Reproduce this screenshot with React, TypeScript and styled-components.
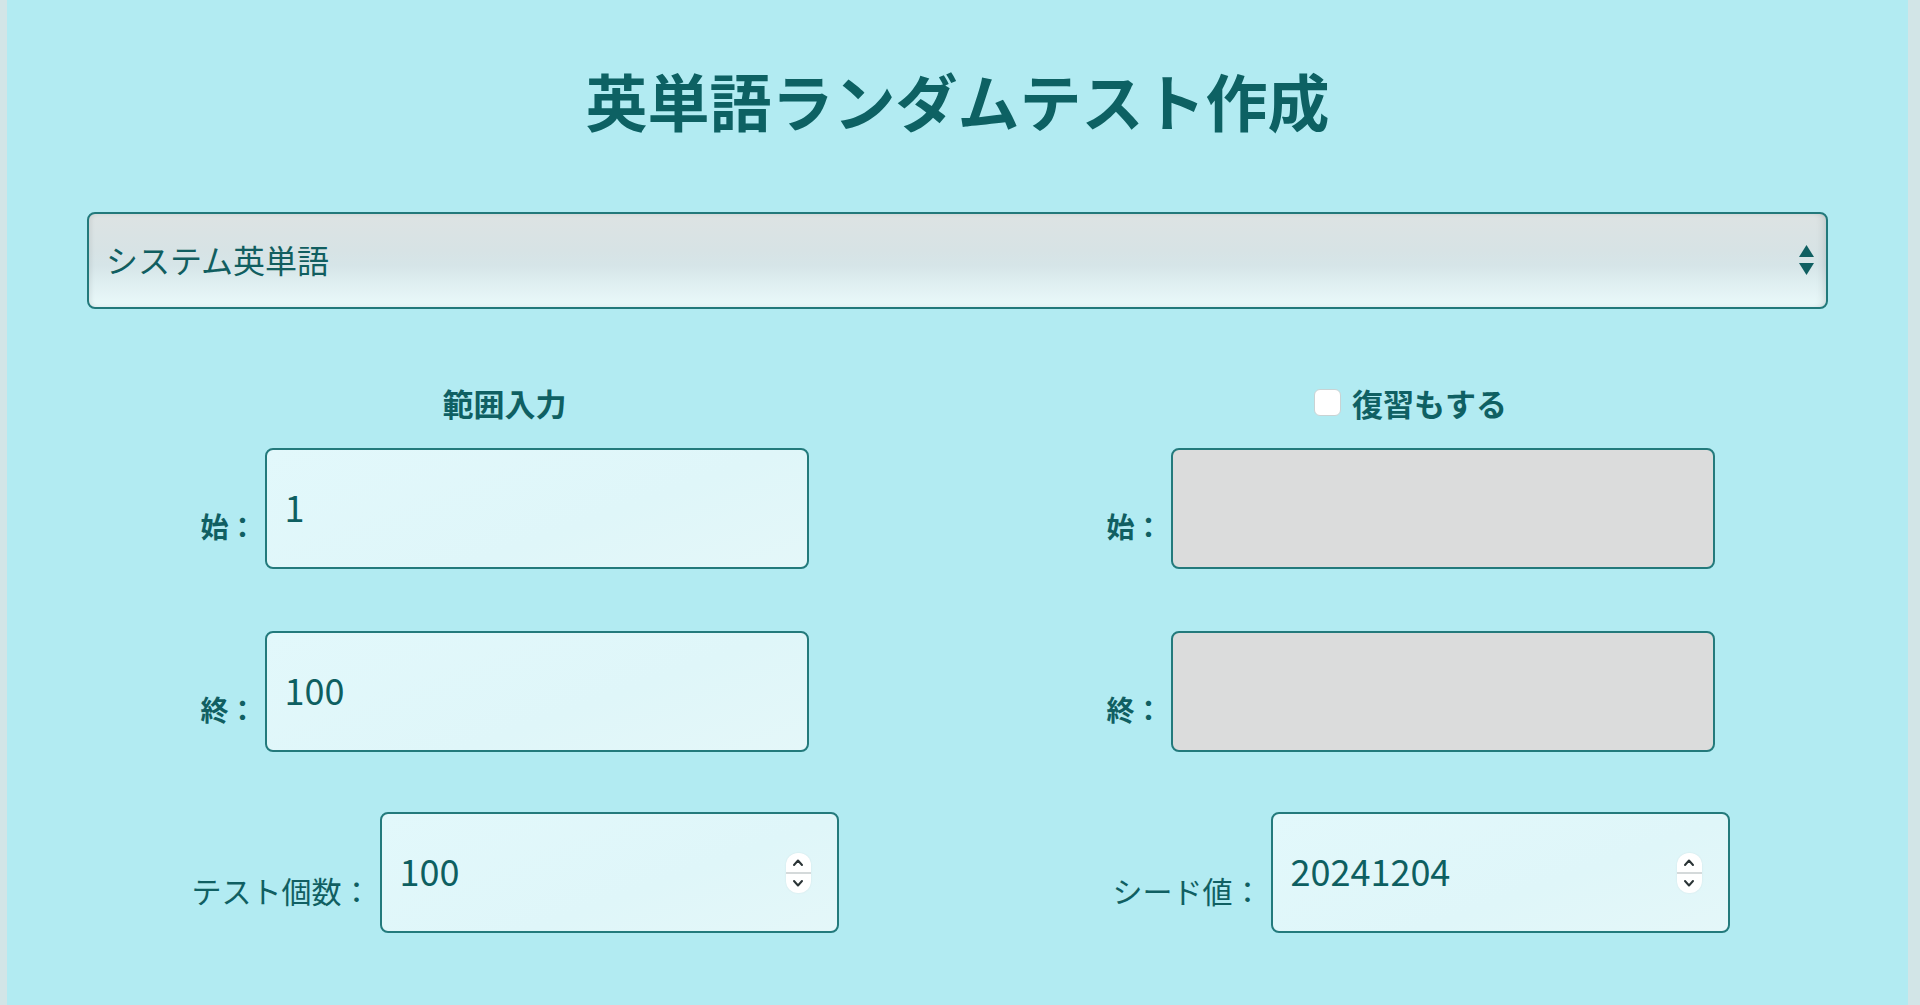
import React from 'react';
import styled, { createGlobalStyle } from 'styled-components';

const GlobalStyle = createGlobalStyle`
  html, body {
    margin: 0;
    padding: 0;
    background: #d2e5e7;
  }
  body {
    font-family: "Noto Sans CJK JP", "Noto Sans", sans-serif;
    color: #0f6264;
  }
`;

const Page = styled.main`
  margin: 0 12px 0 7px;
  min-height: 100vh;
  background: #b2ebf2;
  padding: 62px 80px 60px;
  box-sizing: border-box;
`;

const Title = styled.h1`
  margin: 0;
  text-align: center;
  font-size: 62px;
  line-height: 77px;
  font-weight: 700;
  color: #0d6163;
`;

const SelectWrap = styled.div`
  position: relative;
  margin-top: 73px;
`;

const BookSelect = styled.select`
  appearance: none;
  -webkit-appearance: none;
  display: block;
  width: 100%;
  height: 97px;
  box-sizing: border-box;
  border: 2px solid #22797b;
  border-radius: 8px;
  padding: 0 60px 4px 17px;
  font-family: inherit;
  font-size: 32px;
  color: #115e60;
  background: linear-gradient(
    to bottom,
    #dde3e3 0%,
    #d7e3e5 40%,
    #d6e5e8 55%,
    #dfeff1 75%,
    #eaf9fa 100%
  );
  box-shadow: inset -10px 0 8px -8px rgba(0, 0, 0, 0.12), inset 2px 0 4px rgba(0, 0, 0, 0.08);
  outline: none;
`;

const SelectArrows = styled.svg`
  position: absolute;
  right: 14px;
  top: 33px;
  width: 15px;
  height: 30px;
  pointer-events: none;
`;

const Columns = styled.div`
  display: grid;
  grid-template-columns: 800px 800px;
  column-gap: 106px;
  justify-content: center;
  margin-top: 70px;
`;

const Column = styled.section`
  display: flex;
  flex-direction: column;
  align-items: center;
`;

const ColumnHead = styled.div`
  display: flex;
  align-items: center;
  gap: 11px;
  height: 46px;
  font-size: 31px;
  font-weight: 700;
  color: #0f6063;
  margin-bottom: 23px;
`;

const CheckBox = styled.input`
  appearance: none;
  -webkit-appearance: none;
  margin: 0;
  width: 27px;
  height: 27px;
  border-radius: 6px;
  border: 1px solid #c9d3d4;
  background: #fff;
`;

const Row = styled.div<{ $shift?: number; $gapTop?: number }>`
  display: flex;
  align-items: center;
  gap: 8px;
  margin-top: ${({ $gapTop }) => $gapTop ?? 0}px;
  margin-left: ${({ $shift }) => $shift ?? 0}px;
`;

const Label = styled.label<{ $bold?: boolean }>`
  font-size: ${({ $bold }) => ($bold ? 28 : 30)}px;
  font-weight: ${({ $bold }) => ($bold ? 700 : 400)};
  line-height: 40px;
  margin-top: 34px;
  white-space: nowrap;
  color: #105f62;
`;

const Field = styled.div`
  position: relative;
`;

const TextBox = styled.input<{ $width: number; $disabled?: boolean }>`
  display: block;
  box-sizing: border-box;
  width: ${({ $width }) => $width}px;
  height: 121px;
  border: 2px solid #237a7c;
  border-radius: 8px;
  padding: 0 18px 6px;
  font-family: inherit;
  font-size: 36px;
  color: #0e5f61;
  background: ${({ $disabled }) =>
    $disabled ? '#dbdcdc' : 'linear-gradient(160deg, #e2f8fb 0%, #dff6f9 60%, #e4f7f9 100%)'};
  outline: none;
  -moz-appearance: textfield;
  &::-webkit-outer-spin-button,
  &::-webkit-inner-spin-button {
    -webkit-appearance: none;
    margin: 0;
  }
`;

const Spinner = styled.div`
  position: absolute;
  right: 28px;
  top: 50%;
  transform: translateY(-50%);
  width: 25px;
  height: 40px;
  border-radius: 12px;
  background: #fff;
  display: flex;
  flex-direction: column;
  align-items: center;
  justify-content: space-between;
  padding: 5px 0;
  box-sizing: border-box;
  box-shadow: 0 0 2px rgba(0, 0, 0, 0.08);
  &::after {
    content: '';
    position: absolute;
    left: 0;
    right: 0;
    top: 19px;
    height: 2px;
    background: #d4d9da;
  }
`;

const Chevron = ({ up }: { up?: boolean }) => (
  <svg width="12" height="9" viewBox="0 0 12 9">
    <path
      d={up ? 'M2 7 L6 2.5 L10 7' : 'M2 2 L6 6.5 L10 2'}
      fill="none"
      stroke="#2b3436"
      strokeWidth="2"
      strokeLinecap="round"
      strokeLinejoin="round"
    />
  </svg>
);

const NumberBox = ({ value, width }: { value: string; width: number }) => (
  <Field>
    <TextBox type="number" defaultValue={value} $width={width} />
    <Spinner>
      <Chevron up />
      <Chevron />
    </Spinner>
  </Field>
);

export default function App() {
  return (
    <>
      <GlobalStyle />
      <Page>
        <Title>英単語ランダムテスト作成</Title>

        <SelectWrap>
          <BookSelect defaultValue="system">
            <option value="system">システム英単語</option>
            <option value="target">ターゲット1900</option>
          </BookSelect>
          <SelectArrows viewBox="0 0 15 30">
            <path d="M7.5 0 L15 12 L0 12 Z" fill="#0f5f61" />
            <path d="M0 18 L15 18 L7.5 30 Z" fill="#0f5f61" />
          </SelectArrows>
        </SelectWrap>

        <Columns>
          <Column>
            <ColumnHead>範囲入力</ColumnHead>
            <Row>
              <Label $bold>始：</Label>
              <TextBox type="text" defaultValue="1" $width={544} />
            </Row>
            <Row $gapTop={62}>
              <Label $bold>終：</Label>
              <TextBox type="text" defaultValue="100" $width={544} />
            </Row>
            <Row $gapTop={60} $shift={21}>
              <Label>テスト個数：</Label>
              <NumberBox value="100" width={459} />
            </Row>
          </Column>

          <Column>
            <ColumnHead>
              <CheckBox type="checkbox" />
              復習もする
            </ColumnHead>
            <Row>
              <Label $bold>始：</Label>
              <TextBox type="text" disabled $disabled $width={544} />
            </Row>
            <Row $gapTop={62}>
              <Label $bold>終：</Label>
              <TextBox type="text" disabled $disabled $width={544} />
            </Row>
            <Row $gapTop={60} $shift={21}>
              <Label>シード値：</Label>
              <NumberBox value="20241204" width={459} />
            </Row>
          </Column>
        </Columns>
      </Page>
    </>
  );
}
